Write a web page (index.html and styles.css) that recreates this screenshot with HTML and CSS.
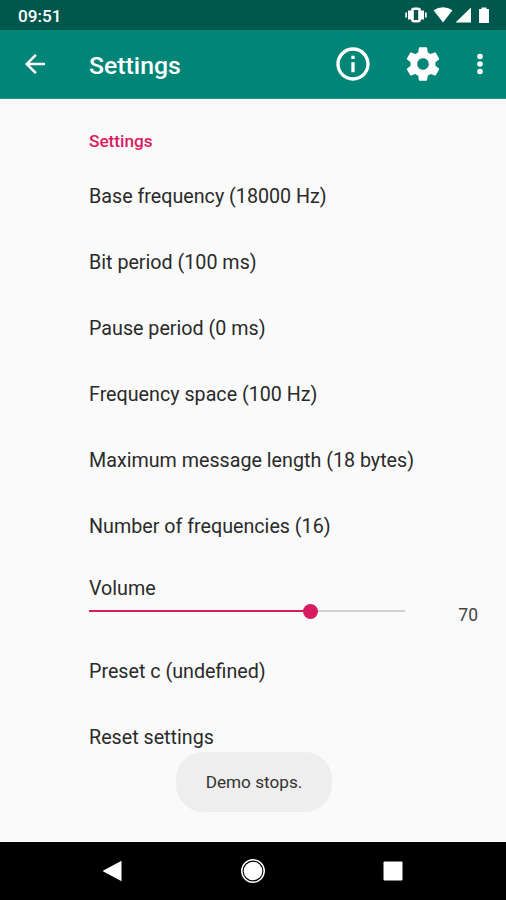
FILE: index.html
```html
<!DOCTYPE html>
<html lang="en">
<head>
    <meta charset="UTF-8">
    <meta name="viewport" content="width=device-width, initial-scale=1.0">
    <title>Settings</title>
    <link rel="stylesheet" href="styles.css">
</head>
<body>
    <div class="status-bar">
        <span class="clock">09:51</span>
        <svg class="status-icons" width="86" height="30" viewBox="0 0 86 30" fill="#fff">
            <rect x="6" y="7.5" width="10" height="15" rx="3"/>
            <rect x="8.8" y="10" width="4.4" height="10" fill="#00574b"/>
            <path d="M3 10.5h3v9H3zM.3 12.5h1.7v5H.3zM16 10.5h3v9h-3zM20 12.5h1.700v5H20z"/>
            <path d="M28.500 10.200Q38 4.200 47.500 10.200L38 22.500z"/>
            <path d="M66 7.500V22.500H50.500z"/>
            <path d="M74 9h2.500V7.500h5V9H84v14H74z"/>
        </svg>
    </div>

    <header class="app-bar">
        <svg class="back" width="30" height="30" viewBox="0 0 24 24" fill="#fff">
            <path d="M20 11H7.830l5.590-5.590L12 4l-8 8 8 8 1.410-1.410L7.830 13H20v-2z"/>
        </svg>
        <h1>Settings</h1>
        <svg class="info" width="40" height="40" viewBox="0 0 24 24" fill="#fff">
            <path d="M11 17h2v-6h-2v6zm1-15C6.480 2 2 6.480 2 12s4.480 10 10 10 10-4.480 10-10S17.520 2 12 2zm0 18c-4.410 0-8-3.590-8-8s3.590-8 8-8 8 3.590 8 8-3.590 8-8 8zM11 9h2V7h-2v2z"/>
        </svg>
        <svg class="gear" width="40" height="40" viewBox="0 0 24 24" fill="#fff">
            <path d="M19.430 12.980c.04-.32.07-.64.07-.98s-.03-.66-.07-.98l2.110-1.650c.19-.15.24-.42.12-.64l-2-3.460c-.12-.22-.39-.3-.61-.22l-2.490 1c-.52-.4-1.080-.73-1.690-.98l-.38-2.650C14.460 2.180 14.250 2 14 2h-4c-.25 0-.46.18-.49.42l-.38 2.650c-.61.25-1.170.59-1.690.98l-2.490-1c-.23-.09-.49 0-.61.22l-2 3.460c-.13.22-.07.49.12.64l2.110 1.650c-.04.32-.07.65-.07.98s.03.66.07.98l-2.110 1.650c-.19.15-.24.42-.12.64l2 3.460c.12.22.39.3.61.22l2.490-1c.52.4 1.080.73 1.690.98l.38 2.650c.03.24.24.42.49.42h4c.25 0 .46-.18.49-.42l.38-2.650c.61-.25 1.170-.59 1.690-.98l2.490 1c.23.09.49 0 .61-.22l2-3.460c.12-.22.07-.49-.12-.64l-2.110-1.650zM12 15.500c-1.930 0-3.500-1.570-3.500-3.500s1.570-3.500 3.500-3.500 3.500 1.570 3.500 3.500-1.570 3.500-3.500 3.500z"/>
        </svg>
        <svg class="more" width="8" height="24" viewBox="0 0 8 24" fill="#fff">
            <circle cx="4" cy="4.500" r="2.800"/>
            <circle cx="4" cy="12" r="2.800"/>
            <circle cx="4" cy="19.500" r="2.800"/>
        </svg>
    </header>

    <main class="settings">
        <h2>Settings</h2>
        <div class="row">Base frequency (18000 Hz)</div>
        <div class="row">Bit period (100 ms)</div>
        <div class="row">Pause period (0 ms)</div>
        <div class="row">Frequency space (100 Hz)</div>
        <div class="row">Maximum message length (18 bytes)</div>
        <div class="row">Number of frequencies (16)</div>
        <div class="volume">
            <div class="volume-label">Volume</div>
            <div class="volume-control">
                <div class="track">
                    <div class="fill" style="width: 70%"></div>
                    <div class="thumb"></div>
                </div>
                <span class="value">70</span>
            </div>
        </div>
        <div class="row">Preset c (undefined)</div>
        <div class="row">Reset settings</div>
        <div class="toast">Demo stops.</div>
    </main>

    <nav class="nav-bar">
        <svg width="24" height="24" viewBox="0 0 24 24" fill="#fff">
            <path d="M1.500 12L20.500 1.800V22.200z"/>
        </svg>
        <svg width="24" height="24" viewBox="0 0 24 24">
            <circle cx="12" cy="12" r="11.200" fill="none" stroke="#fff" stroke-width="1.500"/>
            <circle cx="12" cy="12" r="9.300" fill="#fff"/>
        </svg>
        <svg width="24" height="24" viewBox="0 0 24 24" fill="#fff">
            <rect x="2.500" y="2.500" width="19" height="19" rx="1"/>
        </svg>
    </nav>
</body>
</html>
```
FILE: styles.css
```css
* {
    box-sizing: border-box;
}
body {
    margin: 0;
    height: 900px;
    display: flex;
    flex-direction: column;
    overflow: hidden;
    font-family: Roboto, sans-serif;
    background-color: #fafafa;
    color: #2a2a2a;
}
.status-bar {
    height: 30px;
    display: flex;
    align-items: center;
    justify-content: space-between;
    padding: 0 15px 0 18px;
    background-color: #00574b;
    color: #fff;
}
.clock {
    font-size: 17.2px;
    font-weight: 500;
    padding-top: 2px;
}
.app-bar {
    height: 69px;
    display: flex;
    align-items: center;
    padding: 0 22px 0 20px;
    background-color: #008577;
    border-bottom: 1px solid #2a8f80;
    color: #fff;
}
h1 {
    flex: 1;
    margin: 3px 0 0 39px;
    font-size: 24.8px;
    font-weight: 500;
}
.gear {
    margin-left: 30px;
}
.more {
    margin-left: 33px;
}
.settings {
    position: relative;
    height: 743px;
    padding: 0 28px 0 89px;
}
h2 {
    height: 65px;
    margin: 0;
    padding-top: 30px;
    font-size: 17.2px;
    line-height: 24px;
    font-weight: 500;
    color: #d81b60;
}
.row {
    height: 66px;
    line-height: 66px;
    font-size: 19.7px;
}
.volume {
    height: 79px;
    padding-top: 17px;
}
.volume-label {
    font-size: 19.7px;
    line-height: 24px;
}
.volume-control {
    display: flex;
    justify-content: space-between;
    align-items: flex-start;
}
.track {
    display: flex;
    align-items: center;
    width: 316px;
    height: 20px;
    background: linear-gradient(#d3d3d3, #d3d3d3) center / 100% 2px no-repeat;
}
.fill {
    height: 2px;
    background-color: #d81b60;
}
.thumb {
    width: 15px;
    height: 15px;
    margin-left: -7px;
    border-radius: 50%;
    background-color: #d81b60;
}
.value {
    padding-top: 2px;
    font-size: 17.5px;
    line-height: 24px;
    color: #444;
}
.toast {
    position: absolute;
    left: 176px;
    top: 653px;
    width: 156px;
    height: 60px;
    border-radius: 27px;
    background-color: #eee;
    color: #333;
    font-size: 17.2px;
    line-height: 61px;
    text-align: center;
}
.nav-bar {
    height: 58px;
    display: flex;
    justify-content: space-between;
    align-items: center;
    padding: 0 101px;
    background-color: #000;
}
```
